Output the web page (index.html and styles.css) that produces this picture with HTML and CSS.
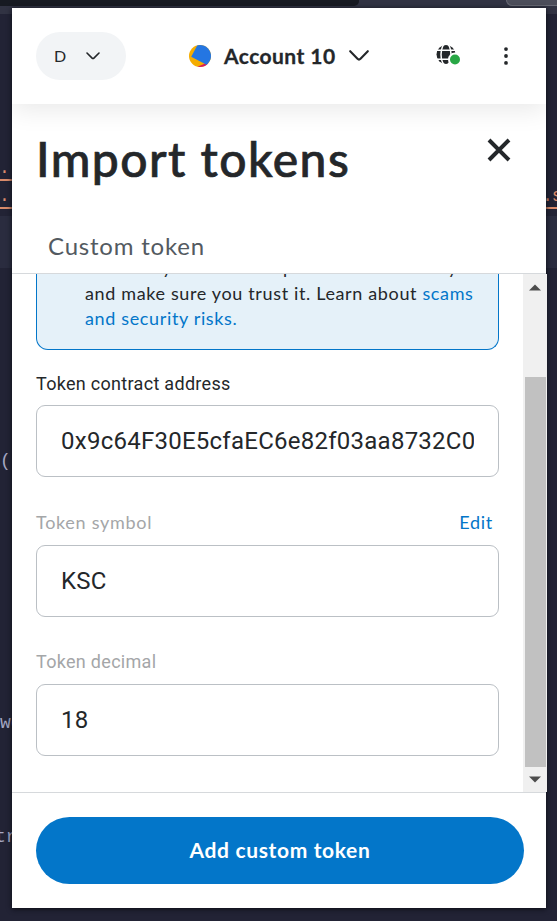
FILE: index.html
```html
<!DOCTYPE html>
<html lang="en">
<head>
<meta charset="utf-8">
<title>Import tokens</title>
<link rel="stylesheet" href="styles.css">
</head>
<body>
<div class="editor" aria-hidden="true">
  <div class="tabs"><div class="tab"></div><div class="chip"></div></div>
  <div class="toolbar"></div>
  <div class="code code-a"><span class="link">.</span></div>
  <div class="code code-b"><span class="link">.</span><span class="link end">.s</span></div>
  <div class="code band"></div>
  <div class="code code-c"><span>(.</span></div>
  <div class="code code-d"><span>we</span></div>
  <div class="code code-e"><span class="try">tr</span></div>
</div>

<main class="popup">
  <header class="bar">
    <button class="network">D
      <svg width="14" height="8" viewBox="0 0 14 8"><path d="M1 1l5.1 5.1q.9.9 1.8 0L13 1" /></svg>
    </button>
    <button class="account">
      <svg class="avatar" width="22" height="22" viewBox="0 0 22 22">
        <defs><clipPath id="disc"><circle cx="11" cy="11" r="11"/></clipPath></defs>
        <g clip-path="url(#disc)"><rect width="22" height="22" fill="#f5ad00"/><path d="M8 22l7.5-3.2L20 18v4z" fill="#d51b61"/><path d="M9-1L2.2 11.7 18 20l7-9V-1z" fill="#2476e2"/></g>
      </svg>
      <span>Account 10</span>
      <svg width="20" height="12" viewBox="0 0 20 12"><path d="M1.2 1.2l7.3 7.6q1.5 1.5 3 0l7.3-7.6" /></svg>
    </button>
    <div class="actions">
      <svg class="globe" width="25" height="21" viewBox="0 0 25 21">
        <circle cx="10" cy="9.5" r="9.5" fill="#24272a"/>
        <g fill="none" stroke="#fff" stroke-width="1.5"><ellipse cx="10" cy="9.5" rx="5" ry="11"/><path d="M0 5.3h20M0 14.2h20"/></g>
        <circle cx="19" cy="14.5" r="7" fill="#fff"/><circle cx="19" cy="14.5" r="5" fill="#28a745"/>
      </svg>
      <svg class="dots" width="4" height="18" viewBox="0 0 4 18"><circle cx="2" cy="2.1" r="1.9"/><circle cx="2" cy="9" r="1.9"/><circle cx="2" cy="15.9" r="1.9"/></svg>
    </div>
  </header>

  <section class="heading">
    <div class="title-row">
      <h1>Import tokens</h1>
      <svg class="close" width="24" height="24" viewBox="0 0 24 24"><path d="M2 2l20 20M22 2L2 22"/></svg>
    </div>
    <div class="tab-name">Custom token</div>
  </section>

  <section class="scroller">
    <div class="form">
      <div class="notice"><p><span class="first">network yet. Please import token manually</span><br>and make sure you trust it. Learn about <a>scams</a><br><a>and security risks.</a></p></div>
      <div class="field address">
        <div class="label"><span>Token contract address</span></div>
        <div class="input"><span>0x9c64F30E5cfaEC6e82f03aa8732C0</span></div>
      </div>
      <div class="field symbol">
        <div class="label muted"><span class="geo">Token symbol</span><a>Edit</a></div>
        <div class="input"><span>KSC</span></div>
      </div>
      <div class="field decimal">
        <div class="label muted"><span>Token decimal</span></div>
        <div class="input"><span>18</span></div>
      </div>
    </div>
    <div class="scrollbar">
      <svg width="12" height="7" viewBox="0 0 12 7"><path d="M0 6.5L6 .5l6 6z"/></svg>
      <div class="thumb"></div>
      <svg width="12" height="7" viewBox="0 0 12 7"><path d="M0 .5l6 6 6-6z"/></svg>
    </div>
  </section>

  <footer><button class="submit">Add custom token</button></footer>
</main>
</body>
</html>
```

FILE: styles.css
```css
* { box-sizing: border-box; }
body { margin: 0; width: 557px; height: 921px; position: relative; overflow: hidden; background: #222335; color: #24272a; font-family: Lato, sans-serif; }
button { border: 0; padding: 0; background: none; font: inherit; color: inherit; }
svg { display: block; flex: none; }
a { color: #0376c9; }

.editor { display: grid; grid-template-rows: 6px 8px 167px 28px 59px 204px 262px 187px; height: 921px; }
.tabs { display: flex; justify-content: space-between; background: #313343; }
.tab { width: 359px; background: #171a22; border-bottom-right-radius: 5px; }
.chip { width: 51px; background: #4b4d5a; border: solid #686a75; border-width: 0 0 1px 1px; border-bottom-left-radius: 7px; }
.toolbar { background: #313343; }
.code { display: flex; align-items: flex-end; justify-content: space-between; font: 18px/22px "Liberation Mono", monospace; color: #a6a8c4; }
.code span { width: 12px; overflow: hidden; white-space: nowrap; }
.code .link { color: #d98b6b; border-bottom: 2px solid #d98b6b; text-indent: -1px; }
.code .end { width: 11px; text-indent: -4px; letter-spacing: -1px; }
.band { background: linear-gradient(#222335 7px, #2a2c3f 7px); }
.code .try { text-indent: -5px; margin-bottom: 73px; }

.popup { position: absolute; left: 12px; top: 8px; width: 534px; height: 900px; display: flex; flex-direction: column; background: #fff; box-shadow: 0 1px 5px #0b0c14; }
.bar { height: 96px; flex: none; display: flex; align-items: center; position: relative; padding: 0 38px 0 24px; box-shadow: 0 6px 24px rgba(0,0,0,.09); clip-path: inset(0 0 -50px 0); }
.bar path, .close path { stroke-linecap: round; }
.network { width: 90px; height: 48px; border-radius: 24px; background: #f2f4f6; display: flex; align-items: center; padding-left: 18px; gap: 20px; font-size: 16px; line-height: 20px; padding-bottom: 1px; }
.network path { fill: none; stroke: #24272a; stroke-width: 1.6; }
.account > svg:last-child path { fill: none; stroke: #24272a; stroke-width: 2.1; }
.account { display: flex; align-items: center; margin-left: 63px; }
.account span { width: 112px; margin: -2px 13px 0; font-size: 21px; font-weight: 700; white-space: nowrap; letter-spacing: .45px; text-align: left; -webkit-text-stroke: .3px; }
.actions { margin-left: auto; display: flex; align-items: center; gap: 43px; }
.globe { margin-top: -1px; }
.dots { fill: #24272a; }

.heading { height: 170px; flex: none; padding: 24px 35px 0 24px; border-bottom: 1px solid #d6d9dc; }
.title-row { display: flex; justify-content: space-between; }
h1 { margin: 1px 0 0; font-size: 48px; line-height: 60px; font-weight: 500; letter-spacing: 1.45px; white-space: nowrap; -webkit-text-stroke: .7px; }
.close { margin-top: 10px; }
.close path { stroke: #24272a; stroke-width: 4; stroke-linecap: butt; }
.tab-name { margin: 41px 0 0 12px; font-size: 24px; line-height: 32px; color: #535a61; letter-spacing: .8px; white-space: nowrap; }

.scroller { height: 518px; flex: none; display: flex; width: 535px; overflow: hidden; }
.form { width: 511px; padding: 0 24px; }
.notice { height: 76px; border: 1px solid #0376c9; border-top: 0; border-radius: 0 0 12px 12px; background: #e5f1f9; padding-left: 48px; overflow: hidden; }
.notice p { margin: -18px 0 0; font-size: 18px; line-height: 25px; white-space: nowrap; letter-spacing: .64px; }
.notice .first { position: relative; top: -1px; letter-spacing: .9px; }
.field { display: flex; flex-direction: column; font-family: Roboto, sans-serif; }
.address { margin-top: 22px; }
.symbol { margin-top: 33px; }
.decimal { margin-top: 33px; }
.label { display: flex; justify-content: space-between; height: 24px; line-height: 24px; font-size: 18px; letter-spacing: .3px; padding-right: 6px; }
.muted { color: #a4a6a8; }
.label a, .geo { font-family: Lato, sans-serif; letter-spacing: .7px; }
.input { margin-top: 9px; height: 72px; border: 1px solid #bbc0c5; border-radius: 9px; padding: 0 24px; line-height: 71px; font-size: 24px; letter-spacing: .25px; }
.input span { display: block; overflow: hidden; white-space: nowrap; }
.symbol .input { margin-top: 11px; line-height: 70px; }
.decimal .input { margin-top: 10px; }
.scrollbar { width: 24px; background: #f0f0f0; display: flex; flex-direction: column; align-items: center; justify-content: space-between; padding: 10px 0 9px; fill: #4c4c4c; }
.thumb { width: 21px; height: 390px; background: #c1c1c1; margin-top: 77px; }

footer { flex: 1; border-top: 1px solid #d6d9dc; padding: 24px 22px 24px 24px; }
.submit { width: 100%; height: 67px; border-radius: 34px; background: #0376c9; color: #fff; font-size: 21px; font-weight: 700; letter-spacing: .65px; padding-bottom: 2px; }
```
